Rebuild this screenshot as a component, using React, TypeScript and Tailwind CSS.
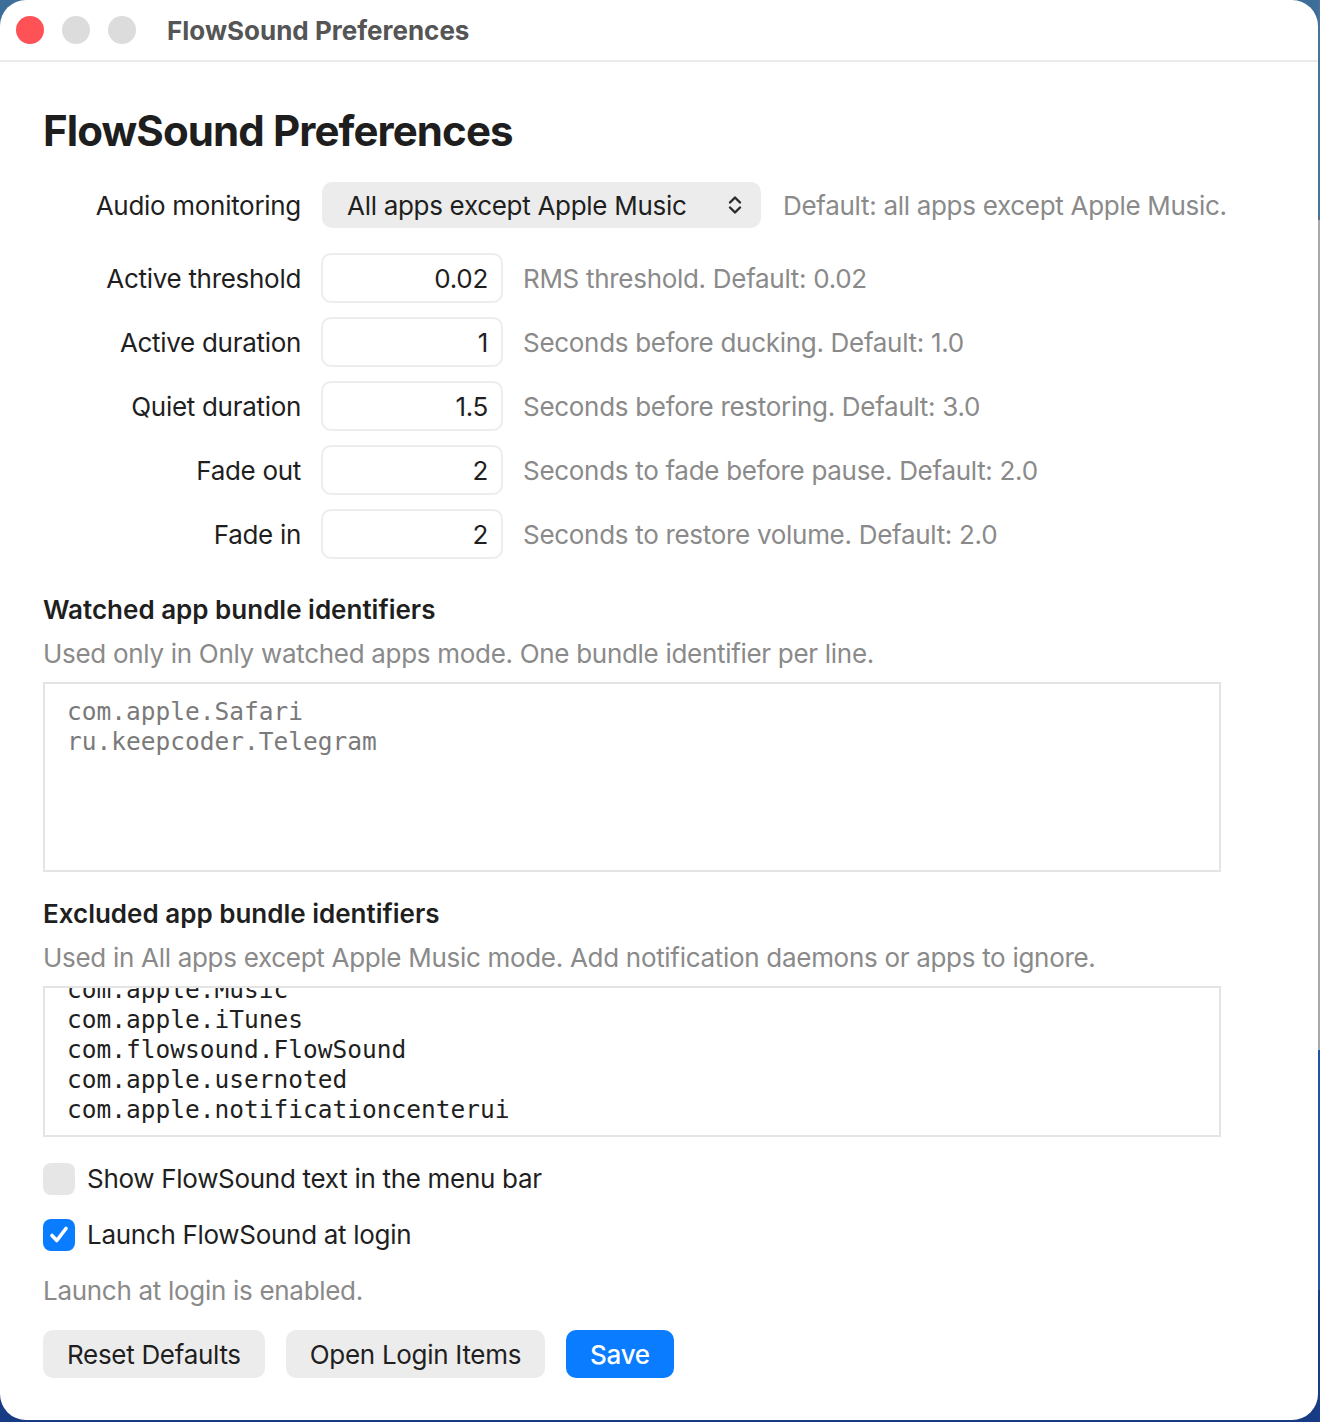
import { useState } from "react";

const sans = "font-['Inter','Noto_Sans',sans-serif]";
const mono = "font-['DejaVu_Sans_Mono','Liberation_Mono',monospace] tracking-normal";

const numberFields = [
  { label: "Active threshold", value: "0.02", help: "RMS threshold. Default: 0.02" },
  { label: "Active duration", value: "1", help: "Seconds before ducking. Default: 1.0" },
  { label: "Quiet duration", value: "1.5", help: "Seconds before restoring. Default: 3.0" },
  { label: "Fade out", value: "2", help: "Seconds to fade before pause. Default: 2.0" },
  { label: "Fade in", value: "2", help: "Seconds to restore volume. Default: 2.0" },
];

const watchedApps = ["com.apple.Safari", "ru.keepcoder.Telegram"];

const excludedApps = [
  "com.apple.Music",
  "com.apple.iTunes",
  "com.flowsound.FlowSound",
  "com.apple.usernoted",
  "com.apple.notificationcenterui",
];

const UpDownChevron = () => (
  <svg width="16" height="24" viewBox="0 0 16 24" fill="none" stroke="#2a2a2a" strokeWidth="2.4" strokeLinecap="round" strokeLinejoin="round">
    <path d="M3 9.5 8 4.5l5 5" />
    <path d="M3 14.5 8 19.5l5-5" />
  </svg>
);

const Checkbox = ({ checked, onToggle, label }: { checked: boolean; onToggle: () => void; label: string }) => (
  <label className="flex cursor-pointer items-center gap-[12px]" onClick={onToggle}>
    <span
      className={
        checked
          ? "flex size-[32px] items-center justify-center rounded-[8px] bg-[#0a7cff]"
          : "flex size-[32px] items-center justify-center rounded-[8px] bg-[#e6e6e6]"
      }
    >
      {checked && (
        <svg width="24" height="24" viewBox="0 0 24 24" fill="none" stroke="white" strokeWidth="3.6" strokeLinecap="round" strokeLinejoin="round">
          <path d="M5 12.5 9.8 17.5 19 5.5" />
        </svg>
      )}
    </span>
    <span className="text-[26px] leading-[32px] text-[#1f1f1f]">{label}</span>
  </label>
);

export default function App() {
  const [showText, setShowText] = useState(false);
  const [launchAtLogin, setLaunchAtLogin] = useState(true);

  return (
    <div className={`flex h-[1422px] w-[1320px] bg-gradient-to-b from-[#3c6e99] via-[#2b5a8c] to-[#173a85] tracking-[-0.3px] ${sans}`}>
      {/* Window */}
      <div className="flex h-[1420px] w-[1318px] flex-col overflow-hidden rounded-[26px] bg-white">
        {/* Title bar */}
        <div className="flex h-[62px] shrink-0 items-center border-b-2 border-[#ebebeb] pl-[16px]">
          <div className="flex items-center gap-[18px]">
            <span className="size-[28px] rounded-full bg-[#ff5257]" />
            <span className="size-[28px] rounded-full bg-[#dcdcdc]" />
            <span className="size-[28px] rounded-full bg-[#dcdcdc]" />
          </div>
          <span className="ml-[31px] text-[26px] font-bold tracking-normal text-[#555555]">FlowSound Preferences</span>
        </div>

        <div className="flex flex-col px-[43px] pt-[42px]">
          <h1 className="text-[42px] font-bold leading-[53px] tracking-[-0.9px] text-[#1e1e1e]">FlowSound Preferences</h1>

          {/* Monitoring mode */}
          <div className="mt-[25px] flex items-center">
            <span className="w-[258px] text-right text-[26px] text-[#1f1f1f]">Audio monitoring</span>
            <button className="ml-[21px] flex h-[46px] w-[439px] items-center justify-between rounded-[10px] bg-[#ececec] pl-[25px] pr-[18px] text-[26px] text-[#1f1f1f]">
              All apps except Apple Music
              <UpDownChevron />
            </button>
            <span className="ml-[22px] text-[26px] text-[#8a8a8a]">Default: all apps except Apple Music.</span>
          </div>

          {/* Timing fields */}
          <div className="mt-[25px] flex flex-col gap-[14px]">
            {numberFields.map((f) => (
              <div key={f.label} className="flex items-center">
                <span className="w-[258px] text-right text-[26px] text-[#1f1f1f]">{f.label}</span>
                <div className="ml-[20px] flex h-[50px] w-[182px] items-center justify-end rounded-[10px] border-2 border-[#ededed] pr-[13px] text-[26px] text-[#1f1f1f]">
                  {f.value}
                </div>
                <span className="ml-[20px] text-[26px] text-[#8a8a8a]">{f.help}</span>
              </div>
            ))}
          </div>

          {/* Watched apps */}
          <h2 className="mt-[35px] text-[26px] font-semibold leading-[32px] tracking-normal text-[#1f1f1f]">Watched app bundle identifiers</h2>
          <p className="mt-[12px] text-[26px] leading-[32px] text-[#8a8a8a]">
            Used only in Only watched apps mode. One bundle identifier per line.
          </p>
          <div className={`mt-[12px] h-[190px] w-[1178px] border-2 border-[#e4e4e4] pl-[22px] pt-[13px] text-[24.5px] leading-[30px] text-[#7a7a7a] ${mono}`}>
            {watchedApps.map((a) => (
              <div key={a}>{a}</div>
            ))}
          </div>

          {/* Excluded apps, scrolled a little past the first line */}
          <h2 className="mt-[26px] text-[26px] font-semibold leading-[32px] tracking-normal text-[#1f1f1f]">Excluded app bundle identifiers</h2>
          <p className="mt-[12px] text-[26px] leading-[32px] text-[#8a8a8a]">
            Used in All apps except Apple Music mode. Add notification daemons or apps to ignore.
          </p>
          <div className={`mt-[12px] h-[151px] w-[1178px] overflow-hidden border-2 border-[#e4e4e4] pl-[22px] text-[24.5px] leading-[30px] text-[#1f1f1f] ${mono}`}>
            <div className="-mt-[13px]">
              {excludedApps.map((a) => (
                <div key={a}>{a}</div>
              ))}
            </div>
          </div>

          {/* Options */}
          <div className="mt-[26px] flex flex-col gap-[24px]">
            <Checkbox checked={showText} onToggle={() => setShowText(!showText)} label="Show FlowSound text in the menu bar" />
            <Checkbox checked={launchAtLogin} onToggle={() => setLaunchAtLogin(!launchAtLogin)} label="Launch FlowSound at login" />
          </div>
          <p className="mt-[24px] text-[26px] leading-[32px] text-[#8a8a8a]">Launch at login is enabled.</p>

          <div className="mt-[23px] flex gap-[21px]">
            <button className="h-[48px] rounded-[10px] bg-[#ececec] px-[24px] text-[26px] text-[#1f1f1f]">Reset Defaults</button>
            <button className="h-[48px] rounded-[10px] bg-[#ececec] px-[24px] text-[26px] text-[#1f1f1f]">Open Login Items</button>
            <button className="h-[48px] rounded-[10px] bg-[#0a7cff] px-[24px] text-[26px] font-medium text-white">Save</button>
          </div>
        </div>
      </div>

      {/* Sliver of the window behind */}
      <div className="flex w-[2px] flex-col">
        <div className="h-[220px] bg-[#4a7299]" />
        <div className="h-[830px] bg-[#a9a9a9]" />
        <div className="h-[240px] bg-[#1f55a8]" />
        <div className="flex-1 bg-[#183c86]" />
      </div>
    </div>
  );
}
